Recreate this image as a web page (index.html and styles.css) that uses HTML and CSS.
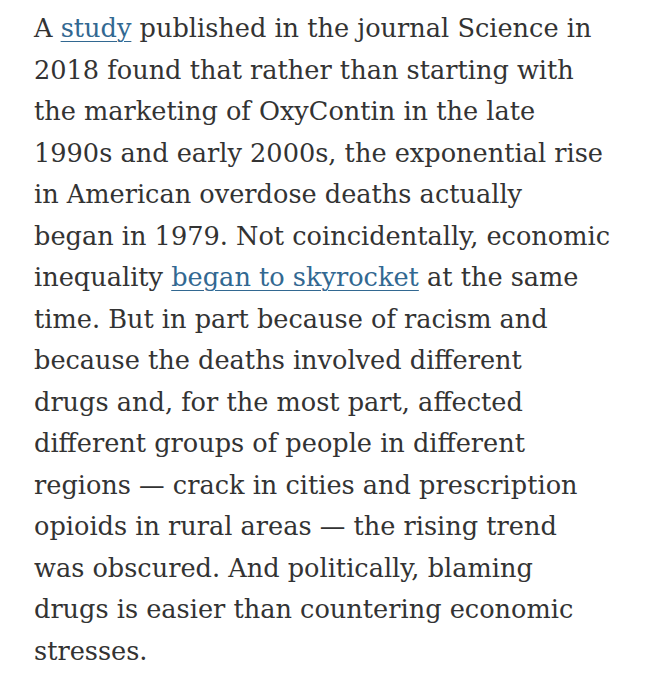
FILE: index.html
```html
<!DOCTYPE html>
<html lang="en">
<head>
<meta charset="utf-8">
<link rel="stylesheet" href="styles.css">
</head>
<body>
<article class="story">
<p class="para">A <a class="link" href="#">study</a> published in the journal Science in<br>
2018 found that rather than starting with<br>
the marketing of OxyContin in the late<br>
1990s and early 2000s, the exponential rise<br>
in American overdose deaths actually<br>
began in 1979. Not coincidentally, economic<br>
inequality <a class="link" href="#">began to skyrocket</a> at the same<br>
time. But in part because of racism and<br>
because the deaths involved different<br>
drugs and, for the most part, affected<br>
different groups of people in different<br>
regions — crack in cities and prescription<br>
opioids in rural areas — the rising trend<br>
was obscured. And politically, blaming<br>
drugs is easier than countering economic<br>
stresses.</p>
</article>
</body>
</html>
```
FILE: styles.css
```css
html, body {
  margin: 0;
  background: #fff;
}
.story {
  padding: 8px 0 0 34px;
}
.para {
  margin: 0;
  white-space: nowrap;
  font-family: "DejaVu Serif", "Liberation Serif", serif;
  font-size: 25.6px;
  line-height: 41.5px;
  color: #333;
}
.link {
  color: #326891;
  text-decoration: underline;
  text-decoration-thickness: 1px;
  text-underline-offset: 4px;
}
```
